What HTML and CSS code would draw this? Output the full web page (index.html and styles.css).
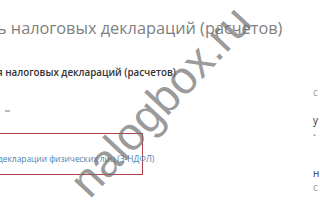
FILE: index.html
```html
<!DOCTYPE html>
<html lang="ru">
<head>
<meta charset="utf-8">
<link rel="stylesheet" href="styles.css">
</head>
<body>
<div class="page">
  <main class="main">
    <h1 class="title">ь налоговых деклараций (расчетов)</h1>
    <h2 class="subtitle">я налоговых деклараций (расчетов)</h2>
    <div class="mark"></div>
    <div class="box">
      <a class="link" href="#">декларации физических лиц (3-НДФЛ)</a>
    </div>
  </main>
  <aside class="side">
    <span class="s1">с</span>
    <span class="s2">у</span>
    <span class="s3">•</span>
    <span class="s4">н</span>
    <span class="s5">с</span>
  </aside>
</div>
<div class="watermark">nalogbox.ru</div>
</body>
</html>
```
FILE: styles.css
```css
html, body {
  margin: 0;
  padding: 0;
  background: #ffffff;
  width: 320px;
  height: 200px;
  overflow: hidden;
}
.page {
  display: flex;
  width: 320px;
  height: 200px;
}
.main {
  width: 316px;
  flex: none;
  display: flex;
  flex-direction: column;
  margin-left: -3px;
}
.title {
  margin: 17px 0 0 0;
  font-family: "Open Sans", sans-serif;
  font-weight: 400;
  font-size: 16.3px;
  line-height: 22px;
  color: #808080;
  white-space: nowrap;
}
.subtitle {
  margin: 27px 0 0 0;
  font-family: "Open Sans", sans-serif;
  font-weight: 600;
  font-size: 9.8px;
  line-height: 14px;
  color: #333333;
  white-space: nowrap;
}
.mark {
  width: 5px;
  height: 2px;
  background: #bbbbbb;
  margin: 30px 0 0 8px;
}
.box {
  margin-top: 21px;
  width: 146px;
  height: 42px;
  border: 1px solid #b2454a;
  box-sizing: border-box;
  display: flex;
  align-items: flex-end;
  padding-bottom: 10px;
}
.link {
  font-family: "Open Sans", sans-serif;
  font-size: 8.4px;
  line-height: 10px;
  color: #4f7fae;
  text-decoration: none;
  white-space: nowrap;
}
.side {
  flex: 1;
  font-family: "Open Sans", sans-serif;
  font-size: 10px;
  color: #333;
  display: flex;
  flex-direction: column;
}
.side span { line-height: 12px; display: block; }
.s1 { margin-top: 86px; color: #999; }
.s2 { margin-top: 16px; }
.s3 { margin-top: 3px; color: #999; font-size: 8px; }
.s4 { margin-top: 26px; }
.s5 { margin-top: 2px; color: #999; }
.watermark {
  position: absolute;
  left: 160px;
  top: 101px;
  transform: translate(-50%, -50%) rotate(-47deg);
  font-family: "Liberation Sans", Arial, sans-serif;
  font-size: 46px;
  line-height: 46px;
  color: rgba(110, 110, 110, 0.7);
  white-space: nowrap;
  pointer-events: none;
}
```
